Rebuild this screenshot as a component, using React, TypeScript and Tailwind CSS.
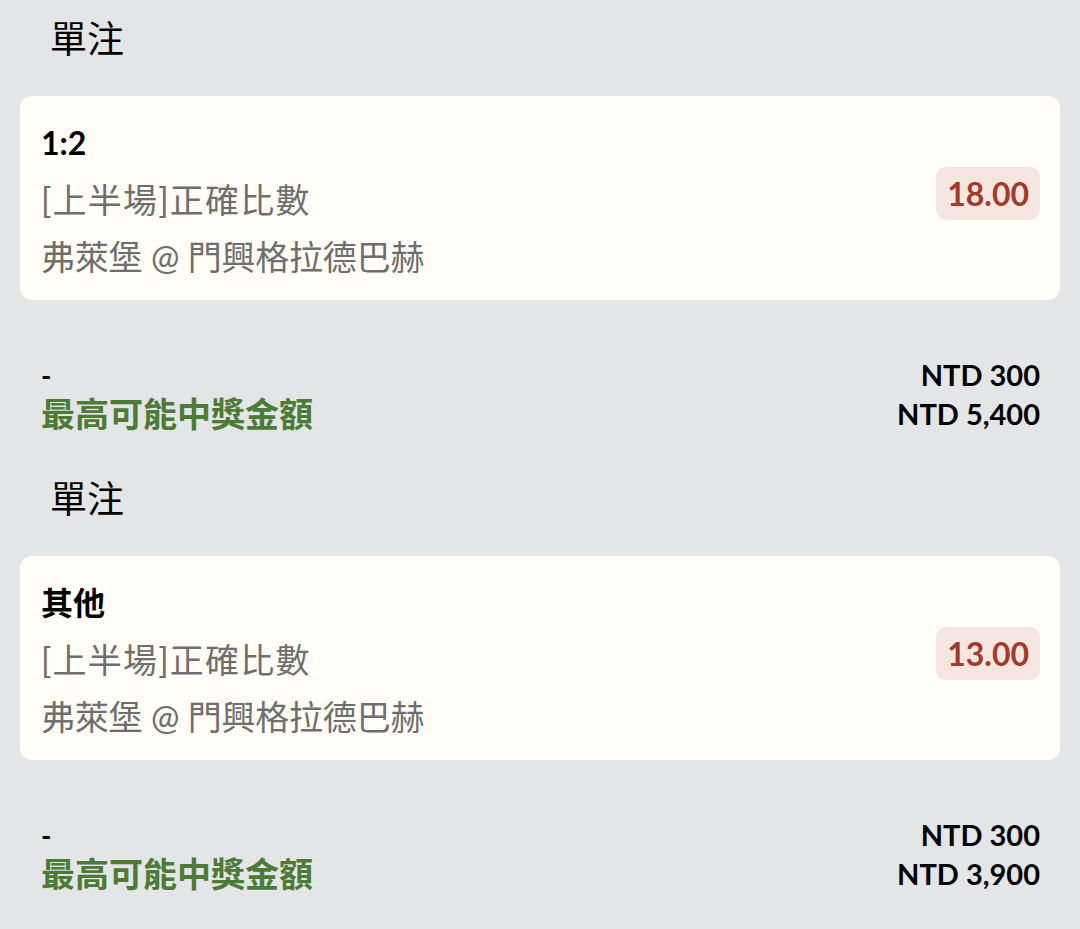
import React from "react";

const FONT = "font-['Lato','Noto_Sans_CJK_TC',sans-serif]";

type Bet = { pick: string; odds: string; stake: string; win: string };

const bets: Bet[] = [
  { pick: "1:2", odds: "18.00", stake: "NTD 300", win: "NTD 5,400" },
  { pick: "其他", odds: "13.00", stake: "NTD 300", win: "NTD 3,900" },
];

function Section({ bet }: { bet: Bet }) {
  return (
    <div>
      <div className="h-[76px] flex items-center pl-[50px] text-[37px] text-black leading-none">
        單注
      </div>
      <div className="mt-[20px] mx-[20px] h-[204px] rounded-[12px] bg-[#fffdf6] pl-[21px] pr-[20px] pt-[18px] flex items-start justify-between">
        <div className="flex flex-col">
          <div className="h-[57px] flex items-center text-[32px] font-bold text-black">{bet.pick}</div>
          <div className="h-[57px] flex items-center text-[34px] text-[#6e6e6e] tracking-[1.2px]">[上半場]正確比數</div>
          <div className="h-[57px] flex items-center text-[34px] text-[#6e6e6e] tracking-[-0.2px]">弗萊堡 @ 門興格拉德巴赫</div>
        </div>
        <div className="mt-[53px] h-[53px] px-[11px] rounded-[10px] bg-[#f5e7df] flex items-center text-[32px] text-[#a33a2b] font-bold">
          {bet.odds}
        </div>
      </div>
      <div className="pt-[55px] pb-[27px] pl-[41px] pr-[40px] flex justify-between">
        <div className="flex flex-col">
          <div className="h-[39px] flex items-center text-[28px] font-bold text-black">-</div>
          <div className="h-[39px] flex items-center text-[34px] font-bold text-[#4c7b36]">最高可能中獎金額</div>
        </div>
        <div className="flex flex-col items-end">
          <div className="h-[39px] flex items-center text-[29px] font-bold text-black">{bet.stake}</div>
          <div className="h-[39px] flex items-center text-[29px] font-bold text-black">{bet.win}</div>
        </div>
      </div>
    </div>
  );
}

export default function App() {
  return (
    <div className={`w-[1080px] h-[929px] overflow-hidden bg-[#e4e5e7] ${FONT}`}>
      {bets.map((b, i) => (
        <Section key={i} bet={b} />
      ))}
    </div>
  );
}
